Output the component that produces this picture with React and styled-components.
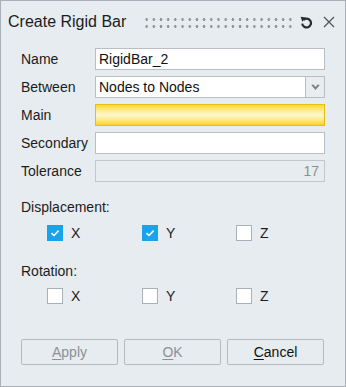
import React from "react";
import styled, { createGlobalStyle } from "styled-components";

const Global = createGlobalStyle`
  html, body { margin: 0; padding: 0; background: #e6ecf0; }
  body { font-family: "Liberation Sans", Arial, sans-serif; }
  * { box-sizing: border-box; }
`;

const Dialog = styled.div`
  width: 346px;
  height: 387px;
  border: 1px solid #a9b0b7;
  background: #e6ecf0;
  display: flex;
  flex-direction: column;
  color: #1a1a1a;
  font-size: 14px;
`;

const Header = styled.div`
  height: 42px;
  display: flex;
  align-items: center;
  padding: 0 10px 0 7px;
`;

const Title = styled.div`
  font-size: 16px;
  color: #1c1c1c;
  white-space: nowrap;
`;

const Grip = styled.div`
  margin-left: 17px;
  margin-top: 2px;
  width: 151px;
  height: 14px;
  background-image: radial-gradient(circle at 3.6px 3.5px, #8e9296 1.1px, transparent 1.5px);
  background-size: 7.2px 7px;
`;

const HeaderIcons = styled.div`
  margin-left: auto;
  display: flex;
  align-items: center;
  gap: 9px;
`;

const IconBtn = styled.span`
  display: inline-flex;
  width: 13px;
  height: 13px;
  align-items: center;
  justify-content: center;
`;

const Form = styled.div`
  display: grid;
  grid-template-columns: 74px 230px;
  grid-auto-rows: 22px;
  row-gap: 6px;
  padding: 5px 0 0 20px;
  align-items: center;
`;

const Label = styled.div`
  font-size: 14px;
  color: #1c1c1c;
  white-space: nowrap;
`;

const Input = styled.div`
  height: 22px;
  border: 1px solid ${(p) => (p.$disabled ? "#c2c7cc" : "#b8bec4")};
  background: ${(p) => (p.$disabled ? "#e6ecf0" : "#ffffff")};
  color: ${(p) => (p.$disabled ? "#8c8f92" : "#111")};
  font-size: 14px;
  line-height: 20px;
  padding: 0 5px 0 3px;
  text-align: ${(p) => (p.$right ? "right" : "left")};
`;

const Highlight = styled.div`
  height: 22px;
  border: 1px solid #e6bf14;
  background: linear-gradient(
    to bottom,
    #fbd92c 0%,
    #fde98a 25%,
    #fff7cc 50%,
    #fde98a 75%,
    #f8d322 100%
  );
`;

const SelectWrap = styled.div`
  display: flex;
  height: 22px;
`;

const SelectField = styled(Input)`
  flex: 1;
`;

const SelectButton = styled.div`
  width: 19px;
  height: 22px;
  border: 1px solid #b8bec4;
  border-left: none;
  background: #e9edf0;
  display: flex;
  align-items: center;
  justify-content: center;
`;

const SectionLabel = styled.div`
  margin: ${(p) => p.$mt}px 0 0 20px;
  line-height: 16px;
  font-size: 14px;
  color: #1c1c1c;
`;

const CheckRow = styled.div`
  display: grid;
  grid-template-columns: 95px 94px 94px;
  margin: ${(p) => p.$mt}px 0 0 46px;
  height: 16px;
`;

const CheckItem = styled.label`
  display: flex;
  align-items: center;
  gap: 8px;
  font-size: 14px;
  color: #1c1c1c;
`;

const Box = styled.span`
  width: 16px;
  height: 16px;
  border: 1px solid ${(p) => (p.$checked ? "#1aa3e8" : "#a9b0b6")};
  background: ${(p) => (p.$checked ? "#1aa3e8" : "#ffffff")};
  display: inline-flex;
  align-items: center;
  justify-content: center;
`;

const Footer = styled.div`
  margin-top: auto;
  display: flex;
  gap: 6px;
  padding: 0 0 21px 20px;
`;

const Button = styled.div`
  width: 97px;
  height: 26px;
  border: 1px solid #b5babf;
  border-radius: 2px;
  background: #e6ecf0;
  display: flex;
  align-items: center;
  justify-content: center;
  font-size: 14px;
  color: ${(p) => (p.$disabled ? "#8d9194" : "#111")};
  u { text-decoration-thickness: 1px; text-underline-offset: 2px; }
`;

const Check = () => (
  <svg width="10" height="8" viewBox="0 0 10 8">
    <path d="M1.5 4.2 L4 6.5 L8.6 1.6" fill="none" stroke="#fff" strokeWidth="1.6" />
  </svg>
);

const CheckBox = ({ checked, label }) => (
  <CheckItem>
    <Box $checked={checked}>{checked && <Check />}</Box>
    {label}
  </CheckItem>
);

export default function App() {
  return (
    <>
      <Global />
      <Dialog>
        <Header>
          <Title>Create Rigid Bar</Title>
          <Grip />
          <HeaderIcons>
            <IconBtn>
              <svg width="13" height="13" viewBox="0 0 13 13">
                <path
                  d="M3.4 4 A4.4 4.4 0 1 1 2.2 7.6"
                  fill="none"
                  stroke="#2b2b2b"
                  strokeWidth="2.2"
                />
                <path d="M0.6 0.8 L6 1.6 L2.4 5.8 Z" fill="#2b2b2b" />
              </svg>
            </IconBtn>
            <IconBtn>
              <svg width="12" height="12" viewBox="0 0 12 12">
                <path d="M1 1 L11 11 M11 1 L1 11" stroke="#555" strokeWidth="1.3" />
              </svg>
            </IconBtn>
          </HeaderIcons>
        </Header>
        <Form>
          <Label>Name</Label>
          <Input>RigidBar_2</Input>
          <Label>Between</Label>
          <SelectWrap>
            <SelectField>Nodes to Nodes</SelectField>
            <SelectButton>
              <svg width="9" height="7" viewBox="0 0 9 7">
                <path d="M0.3 1 L4.5 6 L8.7 1 L6.6 0.4 L4.5 3 L2.4 0.4 Z" fill="#7a7e82" />
              </svg>
            </SelectButton>
          </SelectWrap>
          <Label>Main</Label>
          <Highlight />
          <Label>Secondary</Label>
          <Input />
          <Label>Tolerance</Label>
          <Input $disabled $right>17</Input>
        </Form>
        <SectionLabel $mt={17}>Displacement:</SectionLabel>
        <CheckRow $mt={10}>
          <CheckBox checked label="X" />
          <CheckBox checked label="Y" />
          <CheckBox label="Z" />
        </CheckRow>
        <SectionLabel $mt={22}>Rotation:</SectionLabel>
        <CheckRow $mt={9}>
          <CheckBox label="X" />
          <CheckBox label="Y" />
          <CheckBox label="Z" />
        </CheckRow>
        <Footer>
          <Button $disabled><span><u>A</u>pply</span></Button>
          <Button $disabled><span><u>O</u>K</span></Button>
          <Button><span><u>C</u>ancel</span></Button>
        </Footer>
      </Dialog>
    </>
  );
}
